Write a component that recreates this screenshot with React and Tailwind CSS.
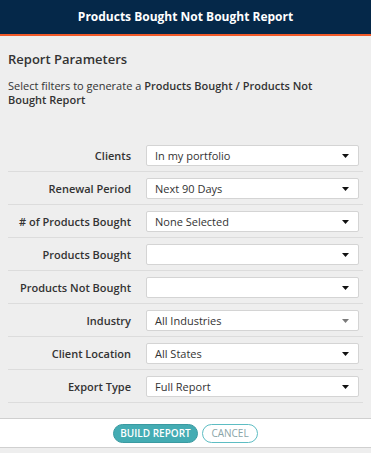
import React from 'react';

const rows = [
  { label: 'Clients', value: 'In my portfolio' },
  { label: 'Renewal Period', value: 'Next 90 Days' },
  { label: '# of Products Bought', value: 'None Selected' },
  { label: 'Products Bought', value: '' },
  { label: 'Products Not Bought', value: '' },
  { label: 'Industry', value: 'All Industries', muted: true },
  { label: 'Client Location', value: 'All States' },
  { label: 'Export Type', value: 'Full Report' },
];

const Caret = ({ muted }) => (
  <svg width="7" height="4" viewBox="0 0 7 4" className="shrink-0">
    <path d="M0 0 L7 0 L3.5 4 Z" fill={muted ? '#7a7a7a' : '#111'} />
  </svg>
);

const App = () => {
  return (
    <div className="w-[371px] h-[453px] bg-[#eeeeee] font-['Open_Sans',sans-serif] text-[#333]">
      <div className="h-[34px] bg-[#052849] border-b-2 border-[#f15a29] box-content flex items-center justify-center">
        <span className="text-white font-bold text-[12px]">Products Bought Not Bought Report</span>
      </div>

      <div className="px-2 pb-[15px] border-b border-[#cfcfcf]">
        <h2 className="mt-[14px] text-[13px] font-semibold leading-[18px] text-[#333]">Report Parameters</h2>
        <p className="mt-[11px] max-w-[320px] text-[11px] leading-[14px] text-[#333]">
          Select filters to generate a <span className="font-semibold">Products Bought / Products Not Bought Report</span>
        </p>

        <div className="mt-[32px]">
          {rows.map((row) => (
            <div key={row.label} className="flex items-center pt-[6px] pb-[5px] border-b border-[#dcdcdc]">
              <div className="w-[123px] text-right text-[11px] font-semibold leading-[14px] text-[#333]">{row.label}</div>
              <div className="ml-[15px] w-[213px] h-[21px] bg-white border border-[#d4d4d4] rounded-[2px] flex items-center justify-between pl-[8px] pr-[9px]">
                <span className="text-[11px] text-[#333] leading-[14px]">{row.value}</span>
                <Caret muted={row.muted} />
              </div>
            </div>
          ))}
        </div>
      </div>

      <div className="h-[29px] bg-white border-b border-[#d0d0d0] flex items-center justify-center gap-[4px]">
        <button className="h-[19px] w-[85px] rounded-full bg-[#44acb3] border border-[#3b9aa1] text-white text-[10px] font-semibold leading-none">
          BUILD REPORT
        </button>
        <button className="h-[19px] w-[56px] rounded-full bg-white border border-[#5dbdc3] text-[#8aa5a8] text-[10px] leading-none">
          CANCEL
        </button>
      </div>
    </div>
  );
};

export default App;
